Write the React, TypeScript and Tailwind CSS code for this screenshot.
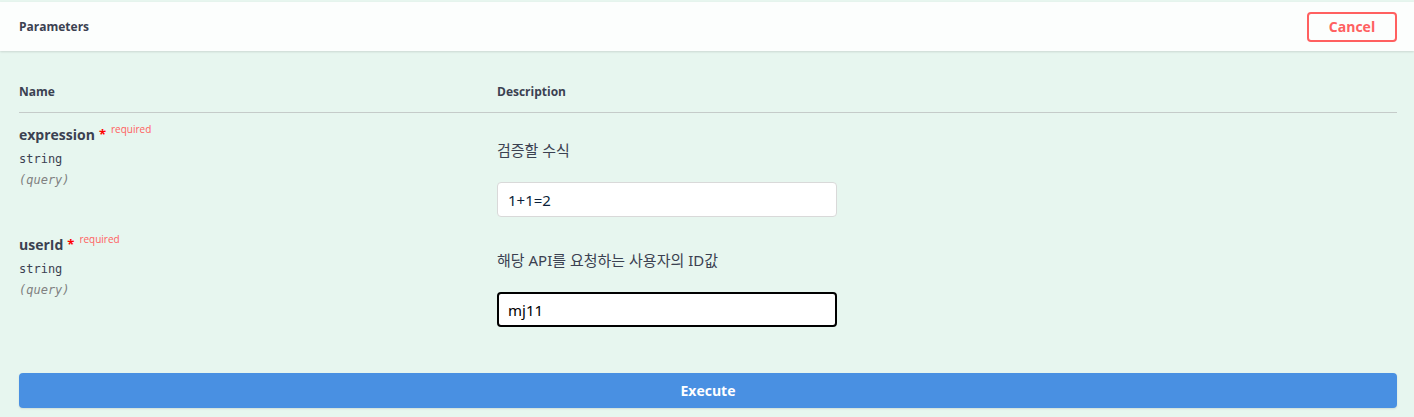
import React from 'react';

type Param = {
  name: string;
  type: string;
  location: string;
  description: string;
  value: string;
  focused?: boolean;
};

const params: Param[] = [
  { name: 'expression', type: 'string', location: '(query)', description: '검증할 수식', value: '1+1=2' },
  { name: 'userId', type: 'string', location: '(query)', description: '해당 API를 요청하는 사용자의 ID값', value: 'mj11', focused: true },
];

function ParamRow({ param }: { param: Param }) {
  const inputRef = React.useRef<HTMLInputElement>(null);

  React.useEffect(() => {
    if (param.focused && inputRef.current) {
      const el = inputRef.current;
      el.focus();
      el.setSelectionRange(el.value.length, el.value.length);
    }
  }, [param.focused]);

  return (
    <div className="flex h-[110px]">
      <div className="w-[478px] pt-[12px]">
        <div className="flex items-start leading-[20px]">
          <span className="text-[14px] font-bold text-[#3b4151]">{param.name}</span>
          <span className="ml-[4px] mt-[-1px] text-[13px] font-bold text-[#ff0000]">*</span>
          <span className="ml-[5px] mt-[-6px] text-[10px] text-[#ff6060]">required</span>
        </div>
        <div className="mt-[4px] font-['DejaVu_Sans_Mono',monospace] text-[12px] leading-[21px] text-[#3b4151]">
          {param.type}
        </div>
        <div className="font-['DejaVu_Sans_Mono',monospace] text-[12px] italic leading-[20px] text-[#808080]">
          {param.location}
        </div>
      </div>
      <div className="flex-1 pt-[27px]">
        <p className="font-['Noto_Sans','Noto_Sans_CJK_KR',sans-serif] text-[15px] leading-[20px] text-[#3b4151]">
          {param.description}
        </p>
        <input
          ref={inputRef}
          type="text"
          defaultValue={param.value}
          className={
            param.focused
              ? "mt-[22px] h-[35px] w-[340px] rounded-[4px] border-2 border-black bg-white px-[9px] font-['Noto_Sans',sans-serif] text-[15px] text-black caret-black outline-none"
              : "mt-[22px] h-[35px] w-[340px] rounded-[4px] border border-[#d9d9d9] bg-white px-[10px] font-['Noto_Sans',sans-serif] text-[15px] text-[#0b1f3a] outline-none"
          }
        />
      </div>
    </div>
  );
}

export default function App() {
  return (
    <div className="min-h-[417px] bg-[#e7f6ef] pt-[2px] font-['Open_Sans','Noto_Sans',sans-serif]">
      <div className="flex h-[49px] items-center justify-between bg-[#fcfefd] pl-[19px] pr-[17px] shadow-[0_1px_2px_rgba(0,0,0,0.12)]">
        <h4 className="text-[12px] font-bold text-[#3b4151]">Parameters</h4>
        <button className="h-[30px] w-[90px] rounded-[4px] border-2 border-[#ff6060] text-[14px] font-bold text-[#ff6060]">
          Cancel
        </button>
      </div>
      <div className="pl-[19px] pr-[17px]">
        <div className="flex border-b border-[#c5cbc9] pt-[33px] pb-[12px] text-[12px] font-bold leading-[16px] text-[#3b4151]">
          <div className="w-[478px]">Name</div>
          <div>Description</div>
        </div>
        {params.map((p) => (
          <ParamRow key={p.name} param={p} />
        ))}
        <button className="mt-[40px] h-[35px] w-full rounded-[4px] bg-[#4990e2] text-[14px] font-bold text-white shadow-[0_1px_2px_rgba(0,0,0,0.1)]">
          Execute
        </button>
      </div>
    </div>
  );
}
